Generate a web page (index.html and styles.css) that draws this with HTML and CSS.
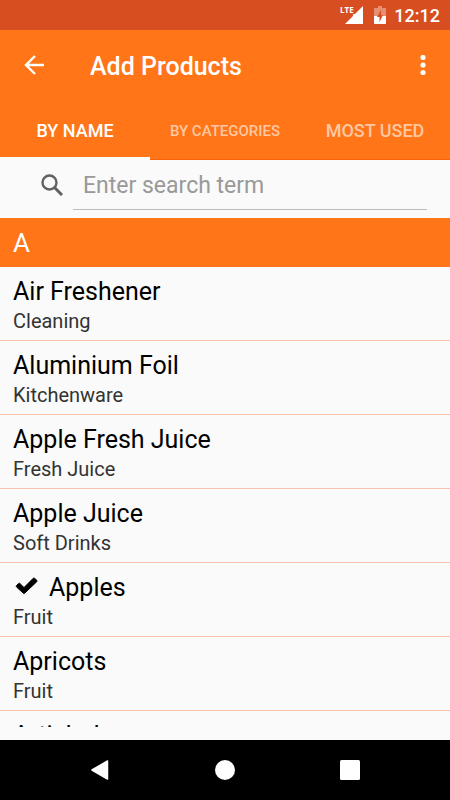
FILE: index.html
```html
<!DOCTYPE html>
<html lang="en">

<head>
    <meta charset="UTF-8">
    <meta name="viewport" content="width=device-width, initial-scale=1.0">
    <title>Add Products</title>
    <link rel="stylesheet" href="styles.css">
</head>

<body>
    <div class="screen">
        <div class="status-bar">
            <svg class="signal" viewBox="0 0 24 20" width="24" height="20" aria-hidden="true">
                <path d="M23 1v18H5l8-8V9h2z" fill="#fff" />
                <path d="M0 0h13v10H0z" fill="#d74f21" />
                <text class="lte" x="0" y="8">LTE</text>
            </svg>
            <svg class="battery" viewBox="0 0 12 18" width="12" height="18" aria-hidden="true">
                <path d="M4 0h4v2h3q1 0 1 1v7H0V3q0-1 1-1h3z" fill="#e78f72" />
                <path d="M0 10h12v7q0 1-1 1H1q-1 0-1-1z" fill="#fff" />
                <path d="M7 4L3 11h2.500v5L9 9H7z" fill="#d74f21" />
            </svg>
            <span class="clock">12:12</span>
        </div>

        <header class="app-bar">
            <button class="icon-btn" type="button" aria-label="Back">
                <svg viewBox="0 0 20 20" width="20" height="20">
                    <path d="M20 10H2M11 1L2 10l9 9" fill="none" stroke="#fff" stroke-width="2.400" />
                </svg>
            </button>
            <h1>Add Products</h1>
            <button class="icon-btn" type="button" aria-label="More options">
                <svg viewBox="0 0 6 20" width="6" height="20">
                    <circle cx="3" cy="2.500" r="2.600" fill="#fff" />
                    <circle cx="3" cy="10" r="2.600" fill="#fff" />
                    <circle cx="3" cy="17.500" r="2.600" fill="#fff" />
                </svg>
            </button>
        </header>

        <nav class="tabs">
            <button class="tab active" type="button">BY NAME</button>
            <button class="tab small" type="button">BY CATEGORIES</button>
            <button class="tab" type="button">MOST USED</button>
        </nav>

        <div class="search">
            <label for="search-term" aria-label="Search">
                <svg viewBox="0 0 22 22" width="22" height="22">
                    <circle cx="8.500" cy="8.500" r="7" fill="none" stroke="#616161" stroke-width="2.400" />
                    <path d="M13.500 13.500L21 21" stroke="#616161" stroke-width="3" />
                </svg>
            </label>
            <input id="search-term" type="text" placeholder="Enter search term">
        </div>

        <main class="products">
            <h2>A</h2>
            <ul>
                <li>
                    <div class="name">Air Freshener</div>
                    <div class="category">Cleaning</div>
                </li>
                <li>
                    <div class="name">Aluminium Foil</div>
                    <div class="category">Kitchenware</div>
                </li>
                <li>
                    <div class="name">Apple Fresh Juice</div>
                    <div class="category">Fresh Juice</div>
                </li>
                <li>
                    <div class="name">Apple Juice</div>
                    <div class="category">Soft Drinks</div>
                </li>
                <li>
                    <div class="name">
                        <svg class="check" viewBox="0 0 24 18" width="24" height="18" aria-hidden="true">
                            <path d="M1.500 8.500l2-2q0.700-0.700 1.400 0L9 10.500 18.200 1.300q0.700-0.700 1.400 0l2.200 2q0.700 0.700 0 1.400L9.700 16.200q-0.700 0.700-1.400 0L1.500 10q-0.700-0.700 0-1.500z" fill="#000" stroke="#000" stroke-width="0.900" />
                        </svg>
                        Apples
                    </div>
                    <div class="category">Fruit</div>
                </li>
                <li>
                    <div class="name">Apricots</div>
                    <div class="category">Fruit</div>
                </li>
                <li>
                    <div class="name">Artichokes</div>
                </li>
            </ul>
        </main>

        <footer class="nav-bar">
            <button type="button" aria-label="Back">
                <svg viewBox="0 0 20 20" width="20" height="20">
                    <path d="M2 10L17.500 1v18z" fill="#fff" stroke="#fff" stroke-width="1.500" stroke-linejoin="round" />
                </svg>
            </button>
            <button type="button" aria-label="Home">
                <svg viewBox="0 0 20 20" width="20" height="20">
                    <circle cx="10" cy="10" r="10" fill="#fff" />
                </svg>
            </button>
            <button type="button" aria-label="Recent apps">
                <svg viewBox="0 0 20 20" width="20" height="20">
                    <rect width="20" height="20" rx="1.500" fill="#fff" />
                </svg>
            </button>
        </footer>
    </div>
</body>

</html>
```

FILE: styles.css
```css
* {
    box-sizing: border-box;
}

body {
    margin: 0;
    font-family: Roboto, "Liberation Sans", sans-serif;
    background-color: #fafafa;
    color: #000;
}

button {
    padding: 0;
    border: none;
    background: none;
    font-family: inherit;
    cursor: pointer;
}

svg {
    display: block;
}

.screen {
    display: flex;
    flex-direction: column;
    height: 100vh;
}

.status-bar {
    display: flex;
    flex: none;
    align-items: center;
    justify-content: flex-end;
    height: 30px;
    padding-right: 10px;
    background-color: #d74f21;
    color: #fff;
}

.signal {
    overflow: visible;
}

.lte {
    font-family: "Open Sans", sans-serif;
    font-size: 8px;
    font-weight: bold;
    fill: #fff;
}

.battery {
    margin: 0 8px 0 10px;
}

.clock {
    font-size: 18px;
    font-weight: 500;
}

.app-bar {
    display: flex;
    flex: none;
    align-items: center;
    height: 70px;
    padding: 0 24px;
    background-color: #ff7518;
    color: #fff;
}

.app-bar h1 {
    flex: 1;
    margin: 2px 0 0 46px;
    font-size: 25px;
    font-weight: 500;
}

.tabs {
    display: grid;
    flex: none;
    grid-template-columns: repeat(3, 1fr);
    height: 60px;
    border-bottom: 1px solid #fb620c;
    background-color: #ff7518;
}

.tab {
    margin-bottom: -1px;
    padding-top: 4px;
    border-bottom: 3px solid transparent;
    color: #ffc8a3;
    font-size: 18px;
    font-weight: 500;
}

.tab.small {
    font-size: 15px;
}

.tab.active {
    border-color: #fff;
    color: #fff;
}

.search {
    display: flex;
    flex: none;
    align-items: center;
    height: 58px;
    padding: 0 23px 8px 41px;
}

.search input {
    flex: 1;
    min-width: 0;
    height: 50px;
    margin-left: 10px;
    padding: 2px 10px 0;
    border: none;
    border-bottom: 1px solid #bdbdbd;
    outline: none;
    background: none;
    font-family: inherit;
    font-size: 23px;
}

.search input::placeholder {
    color: #999;
}

.products {
    flex: 1;
    min-height: 0;
    margin-bottom: 13px;
    overflow: hidden;
}

.products h2 {
    margin: 0;
    padding: 2px 13px 0;
    background-color: #ff7518;
    color: #fff;
    font-size: 26px;
    font-weight: 400;
    line-height: 47px;
}

.products ul {
    margin: 0;
    padding: 0;
    list-style: none;
}

.products li {
    height: 74px;
    padding: 9px 13px 0;
    border-bottom: 1px solid #fbc3ad;
}

.name {
    display: flex;
    align-items: center;
    font-size: 25px;
    line-height: 32px;
}

.check {
    margin: 0 10px 4px 2px;
}

.category {
    color: #333;
    font-size: 20px;
    line-height: 26px;
}

.nav-bar {
    display: flex;
    flex: none;
    align-items: center;
    justify-content: center;
    gap: 105px;
    height: 60px;
    background-color: #000;
}
```
